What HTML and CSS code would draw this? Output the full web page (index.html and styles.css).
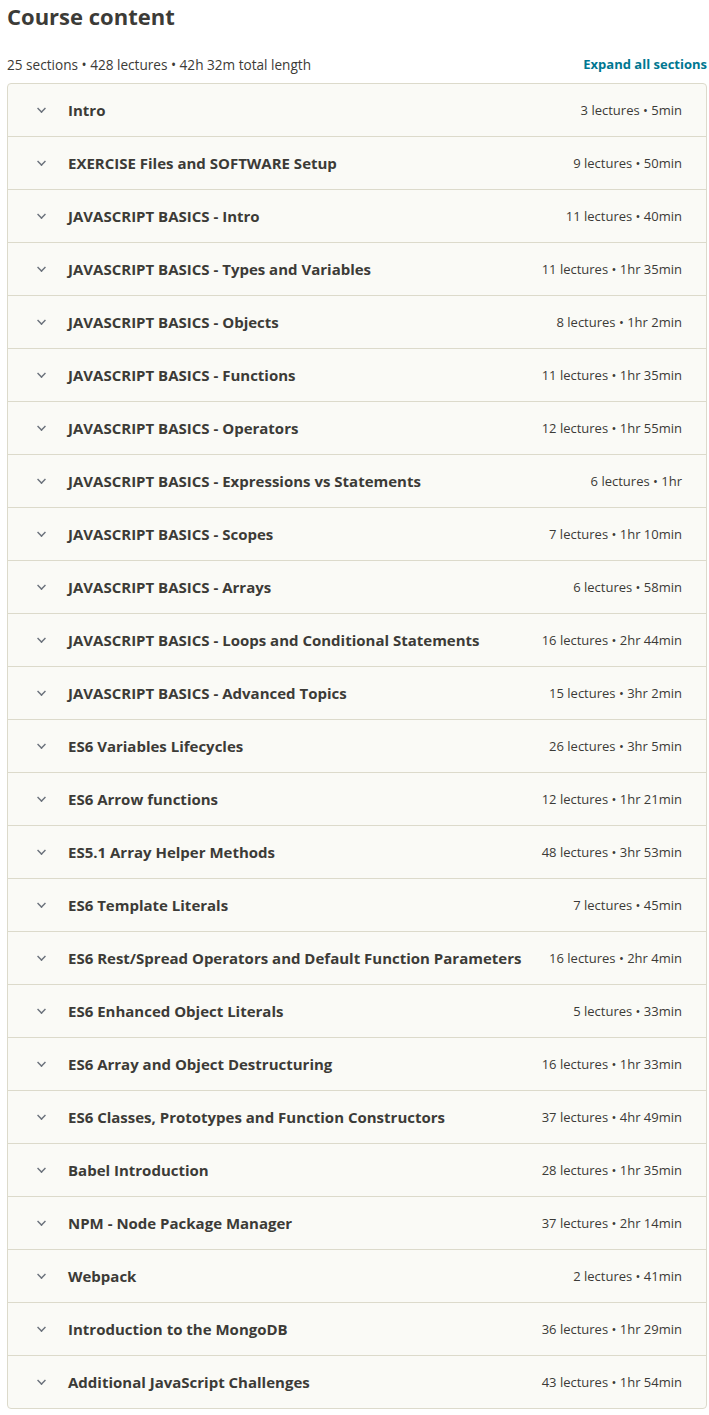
FILE: index.html
```html
<!DOCTYPE html>
<html>
<head>
<meta charset="utf-8" />
<title>Course content</title>
<link rel="stylesheet" href="styles.css">
</head>
<body>
<div class="curriculum">
	<h2 class="title">Course content</h2>
	<div class="summary">
		<span>25 sections • 428 lectures • 42h 32m total length</span>
		<a class="expand" href="#">Expand all sections</a>
	</div>
	<div class="sections">
		<div class="row"><span class="chev"></span><span class="name">Intro</span><span class="meta">3 lectures • 5min</span></div>
		<div class="row"><span class="chev"></span><span class="name">EXERCISE Files and SOFTWARE Setup</span><span class="meta">9 lectures • 50min</span></div>
		<div class="row"><span class="chev"></span><span class="name">JAVASCRIPT BASICS - Intro</span><span class="meta">11 lectures • 40min</span></div>
		<div class="row"><span class="chev"></span><span class="name">JAVASCRIPT BASICS - Types and Variables</span><span class="meta">11 lectures • 1hr 35min</span></div>
		<div class="row"><span class="chev"></span><span class="name">JAVASCRIPT BASICS - Objects</span><span class="meta">8 lectures • 1hr 2min</span></div>
		<div class="row"><span class="chev"></span><span class="name">JAVASCRIPT BASICS - Functions</span><span class="meta">11 lectures • 1hr 35min</span></div>
		<div class="row"><span class="chev"></span><span class="name">JAVASCRIPT BASICS - Operators</span><span class="meta">12 lectures • 1hr 55min</span></div>
		<div class="row"><span class="chev"></span><span class="name">JAVASCRIPT BASICS - Expressions vs Statements</span><span class="meta">6 lectures • 1hr</span></div>
		<div class="row"><span class="chev"></span><span class="name">JAVASCRIPT BASICS - Scopes</span><span class="meta">7 lectures • 1hr 10min</span></div>
		<div class="row"><span class="chev"></span><span class="name">JAVASCRIPT BASICS - Arrays</span><span class="meta">6 lectures • 58min</span></div>
		<div class="row"><span class="chev"></span><span class="name">JAVASCRIPT BASICS - Loops and Conditional Statements</span><span class="meta">16 lectures • 2hr 44min</span></div>
		<div class="row"><span class="chev"></span><span class="name">JAVASCRIPT BASICS - Advanced Topics</span><span class="meta">15 lectures • 3hr 2min</span></div>
		<div class="row"><span class="chev"></span><span class="name">ES6 Variables Lifecycles</span><span class="meta">26 lectures • 3hr 5min</span></div>
		<div class="row"><span class="chev"></span><span class="name">ES6 Arrow functions</span><span class="meta">12 lectures • 1hr 21min</span></div>
		<div class="row"><span class="chev"></span><span class="name">ES5.1 Array Helper Methods</span><span class="meta">48 lectures • 3hr 53min</span></div>
		<div class="row"><span class="chev"></span><span class="name">ES6 Template Literals</span><span class="meta">7 lectures • 45min</span></div>
		<div class="row"><span class="chev"></span><span class="name">ES6 Rest/Spread Operators and Default Function Parameters</span><span class="meta">16 lectures • 2hr 4min</span></div>
		<div class="row"><span class="chev"></span><span class="name">ES6 Enhanced Object Literals</span><span class="meta">5 lectures • 33min</span></div>
		<div class="row"><span class="chev"></span><span class="name">ES6 Array and Object Destructuring</span><span class="meta">16 lectures • 1hr 33min</span></div>
		<div class="row"><span class="chev"></span><span class="name">ES6 Classes, Prototypes and Function Constructors</span><span class="meta">37 lectures • 4hr 49min</span></div>
		<div class="row"><span class="chev"></span><span class="name">Babel Introduction</span><span class="meta">28 lectures • 1hr 35min</span></div>
		<div class="row"><span class="chev"></span><span class="name">NPM - Node Package Manager</span><span class="meta">37 lectures • 2hr 14min</span></div>
		<div class="row"><span class="chev"></span><span class="name">Webpack</span><span class="meta">2 lectures • 41min</span></div>
		<div class="row"><span class="chev"></span><span class="name">Introduction to the MongoDB</span><span class="meta">36 lectures • 1hr 29min</span></div>
		<div class="row"><span class="chev"></span><span class="name">Additional JavaScript Challenges</span><span class="meta">43 lectures • 1hr 54min</span></div>
	</div>
</div>
</body>
</html>
```

FILE: styles.css
```css
body{ margin: 0; background: #fff; color: #3c3b37; font-family: "Open Sans", "Noto Sans", sans-serif; }
.curriculum{ margin: 0 2px 0 7px; }
.title{ margin: 0; font-size: 22px; line-height: 32px; font-weight: 700; color: #3c3b37; }
.summary{ display: flex; justify-content: space-between; align-items: center; margin-top: 18px; height: 28px; font-size: 13.6px; }
.expand{ color: #007791; font-weight: 700; text-decoration: none; font-size: 13px; }
.sections{ margin-top: 5px; border: 1px solid #dcdacb; border-radius: 4px; background: #fafaf6; }
.row{ display: flex; align-items: center; height: 52px; border-top: 1px solid #dcdacb; padding: 0 24px 0 27px; }
.row:first-child{ border-top: 0; }
.chev{ width: 7px; height: 7px; border-right: 2px solid #686f7a; border-bottom: 2px solid #686f7a; transform: rotate(45deg) scale(0.7); margin: -4px 22px 0 2px; }
.name{ flex: 1; font-size: 15px; font-weight: 700; }
.meta{ font-size: 13px; color: #3c3b37; }
```
